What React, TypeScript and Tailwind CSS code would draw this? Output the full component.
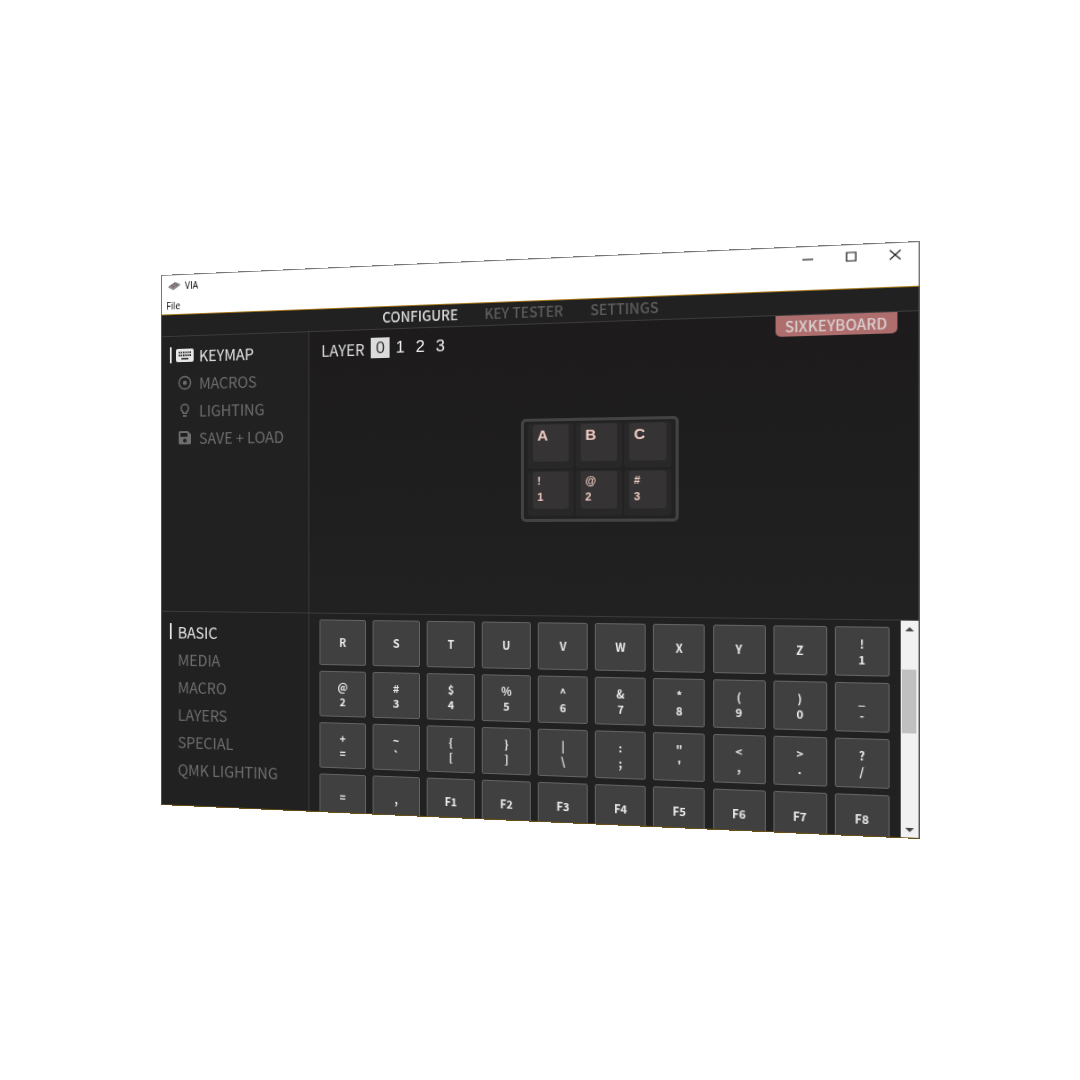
import React, { useState } from "react";
import { FaSave } from "react-icons/fa";

const sans = "font-['Noto_Sans_CJK_SC',sans-serif]";

const keycodes: string[][] = [
  ["R"], ["S"], ["T"], ["U"], ["V"], ["W"], ["X"], ["Y"], ["Z"], ["!", "1"],
  ["@", "2"], ["#", "3"], ["$", "4"], ["%", "5"], ["^", "6"], ["&", "7"], ["*", "8"], ["(", "9"], [")", "0"], ["_", "-"],
  ["+", "="], ["~", "`"], ["{", "["], ["}", "]"], ["|", "\\"], [":", ";"], ["\"", "'"], ["<", ","], [">", "."], ["?", "/"],
  ["="], [","], ["F1"], ["F2"], ["F3"], ["F4"], ["F5"], ["F6"], ["F7"], ["F8"],
];

const board: string[][] = [["A"], ["B"], ["C"], ["!", "1"], ["@", "2"], ["#", "3"]];

function KeyboardIcon() {
  return (
    <svg viewBox="0 0 20 14" className="h-[14px] w-5">
      <rect width="20" height="14" rx="2" fill="currentColor" />
      <path d="M3 3.8h14M3 7h14" stroke="#212121" strokeWidth="1.8" strokeDasharray="1.6 .88" />
      <path d="M6 10.6h8" stroke="#212121" strokeWidth="1.6" />
    </svg>
  );
}

function TargetIcon() {
  return (
    <svg viewBox="0 0 16 16" className="size-4" fill="none" stroke="currentColor" strokeWidth="1.5">
      <circle cx="8" cy="8" r="6.6" />
      <circle cx="8" cy="8" r="2.2" fill="currentColor" stroke="none" />
    </svg>
  );
}

function BulbIcon() {
  return (
    <svg viewBox="0 0 16 16" className="size-4" fill="none" stroke="currentColor" strokeWidth="1.5">
      <path d="M6 11.2V9.6C4.6 8.8 3.8 7.6 3.8 5.9a4.2 4.2 0 0 1 8.4 0c0 1.7-.8 2.9-2.2 3.7v1.6Z" strokeLinejoin="round" />
      <path d="M6 14h4" strokeWidth="1.8" />
    </svg>
  );
}

function AppIcon() {
  return (
    <svg viewBox="0 0 14 10" className="h-[10px] w-[14px]">
      <path d="M0.5 5.5 8 1l5.5 2.4L6 8.2Z" fill="#8b8587" />
      <path d="M0.5 5.5 6 8.2v1.3L0.5 6.8Z" fill="#777073" />
      <path d="M6 8.2 13.5 3.4v1.3L6 9.5Z" fill="#6e6668" />
      <path d="M3 5.4 5 4.2M5.4 6.5l2-1.2M6 3.6l2-1.2M8.5 4.7l2-1.2" stroke="#544c4f" strokeWidth="1" />
      <path d="M5.6 5.1 7.6 3.9" stroke="#c98a8a" strokeWidth="1" />
    </svg>
  );
}

const menu = [
  { label: "KEYMAP", icon: <KeyboardIcon /> },
  { label: "MACROS", icon: <TargetIcon /> },
  { label: "LIGHTING", icon: <BulbIcon /> },
  { label: "SAVE + LOAD", icon: <FaSave className="size-4" /> },
];

const categories = ["BASIC", "MEDIA", "MACRO", "LAYERS", "SPECIAL", "QMK LIGHTING"];

function SideItem({ active, onClick, children }: { active: boolean; onClick: () => void; children: React.ReactNode }) {
  return (
    <button
      onClick={onClick}
      className={`flex h-[29px] w-full items-center pl-[9px] text-left ${active ? "text-[#e8e8e8]" : "text-[#6e6e6e]"}`}
    >
      <span className={`h-[17px] w-[2px] ${active ? "bg-[#e8e8e8]" : "bg-transparent"}`} />
      {children}
    </button>
  );
}

function TitleBar() {
  return (
    <header className="bg-white text-black font-['Open_Sans',sans-serif]">
      <div className="flex h-[23px] items-center pb-px pl-[7px]">
        <AppIcon />
        <span className="ml-[5px] text-[10px] leading-4 font-medium">VIA</span>
        <div className="mr-px ml-auto flex">
          <button aria-label="Minimize" className="flex h-[22px] w-10 items-center justify-center">
            <svg viewBox="0 0 10 10" className="size-[10px]" stroke="#222" strokeWidth="1.2" fill="none"><path d="M0 6h10" /></svg>
          </button>
          <button aria-label="Maximize" className="flex h-[22px] w-10 items-center justify-center">
            <svg viewBox="0 0 10 10" className="size-[10px]" stroke="#222" strokeWidth="1.2" fill="none"><path d="M.8 1h8.4v8H.8Z" /></svg>
          </button>
          <button aria-label="Close" className="flex h-[22px] w-10 items-center justify-center">
            <svg viewBox="0 0 10 10" className="size-[10px]" stroke="#222" strokeWidth="1.2" fill="none"><path d="M0 .5 10 9.5M10 .5 0 9.5" /></svg>
          </button>
        </div>
      </div>
      <div className="flex h-[18px] items-center pl-[5px]">
        <button className="text-[10px] leading-4">File</button>
      </div>
    </header>
  );
}

export default function App() {
  const [tab, setTab] = useState("CONFIGURE");
  const [section, setSection] = useState("KEYMAP");
  const [category, setCategory] = useState("BASIC");
  const [layer, setLayer] = useState(0);

  return (
    <main className="flex min-h-screen items-center justify-center overflow-hidden bg-white">
      <div className={`w-[71%] border border-[#777] [transform:perspective(940px)_translateX(-23px)_rotateY(-8.5deg)] ${sans}`}>
        <TitleBar />
        <div className="-mx-px -mb-px border border-t-[#a8781a] border-r-[#555] border-b-[#6b5018] border-l-[#6b5018] bg-[#212121]">
          <nav className="flex h-[23px] items-center justify-center gap-[27px] border-b border-[#3c3c3c] pb-[2px] text-[14px] leading-5 font-medium">
            {["CONFIGURE", "KEY TESTER", "SETTINGS"].map((t) => (
              <button key={t} onClick={() => setTab(t)} className={tab === t ? "text-[#dcdcdc]" : "text-[#5e5e5e]"}>
                {t}
              </button>
            ))}
          </nav>

          <div className="flex h-[291px] border-b border-[#3c3c3c]">
            <aside className="w-[164px] shrink-0 border-r border-[#3c3c3c] pt-[5px] text-[16px] leading-5">
              {menu.map((m) => (
                <SideItem key={m.label} active={section === m.label} onClick={() => setSection(m.label)}>
                  <span className="mr-[6px] ml-[5px] flex w-5 justify-center">{m.icon}</span>
                  {m.label}
                </SideItem>
              ))}
            </aside>
            <section className="relative flex flex-1 items-center justify-center bg-linear-to-b from-[#1d1b1c] to-[#212121] pt-px">
              <div className="absolute top-2 left-[13px] flex items-center text-[#e0e0e0]">
                <span className="mr-[7px] text-[16px] leading-5">LAYER</span>
                <div className="flex gap-px font-['Liberation_Sans',sans-serif] text-[17px] leading-5">
                  {[0, 1, 2, 3].map((n) => (
                    <button
                      key={n}
                      onClick={() => setLayer(n)}
                      className={`h-[21px] w-5 ${layer === n ? "bg-[#dcdcdc] text-[#333]" : "text-[#f0f0f0]"}`}
                    >
                      {n}
                    </button>
                  ))}
                </div>
              </div>
              <div className="absolute top-0 right-[19px] rounded-b-[5px] bg-[#ae6e6e] px-[9px] text-[14px] leading-5 font-medium text-[#dccfcf]">
                SIXKEYBOARD
              </div>
              <div className="grid grid-cols-3 gap-[2px] rounded-[5px] border-3 border-[#434343] bg-[#222] px-1 pt-[2px] pb-[3px] font-['Liberation_Sans',sans-serif] font-bold text-[#f1cdc4]">
                {board.map((k) => (
                  <button key={k[0]} className="h-[45px] w-[46px] rounded-[3px] bg-[#292829] px-[5px] pt-px pb-[7px] text-left">
                    <span
                      className={`flex h-full flex-col rounded-[3px] bg-[#363334] pl-1 ${
                        k.length === 1 ? "pt-[3px] text-[15px] leading-4" : "pt-px text-[11px] leading-4"
                      }`}
                    >
                      {k.map((l) => (
                        <span key={l}>{l}</span>
                      ))}
                    </span>
                  </button>
                ))}
              </div>
            </section>
          </div>

          <div className="flex h-[204px]">
            <aside className="w-[164px] shrink-0 border-r border-[#3c3c3c] pt-[6px] text-[16px] leading-5">
              {categories.map((c) => (
                <SideItem key={c} active={category === c} onClick={() => setCategory(c)}>
                  <span className="ml-[7px]">{c}</span>
                </SideItem>
              ))}
            </aside>
            <section className="flex-1 overflow-hidden pt-[6px] pr-[10px] pl-[11px]">
              <div className="grid grid-cols-[repeat(10,50px)] justify-between gap-y-[6px] text-[11px] leading-[15px] font-bold text-[#eee]">
                {keycodes.map((k) => (
                  <button
                    key={k.join("")}
                    className="flex h-[47px] flex-col items-center justify-center rounded-[2px] border border-[#646464] bg-[#404040]"
                  >
                    {k.map((l) => (
                      <span key={l}>{l}</span>
                    ))}
                  </button>
                ))}
              </div>
            </section>
            <div className="flex w-4 shrink-0 flex-col items-center bg-[#f1f1f1]">
              <svg viewBox="0 0 16 15" className="h-[15px] w-4" fill="#444"><path d="M8 6 12 10H4Z" /></svg>
              <div className="mt-[31px] h-[60px] w-[13px] bg-[#c0c0c0]" />
              <svg viewBox="0 0 16 15" className="mt-auto h-[15px] w-4" fill="#444"><path d="M8 10 12 6H4Z" /></svg>
            </div>
          </div>
        </div>
      </div>
    </main>
  );
}
